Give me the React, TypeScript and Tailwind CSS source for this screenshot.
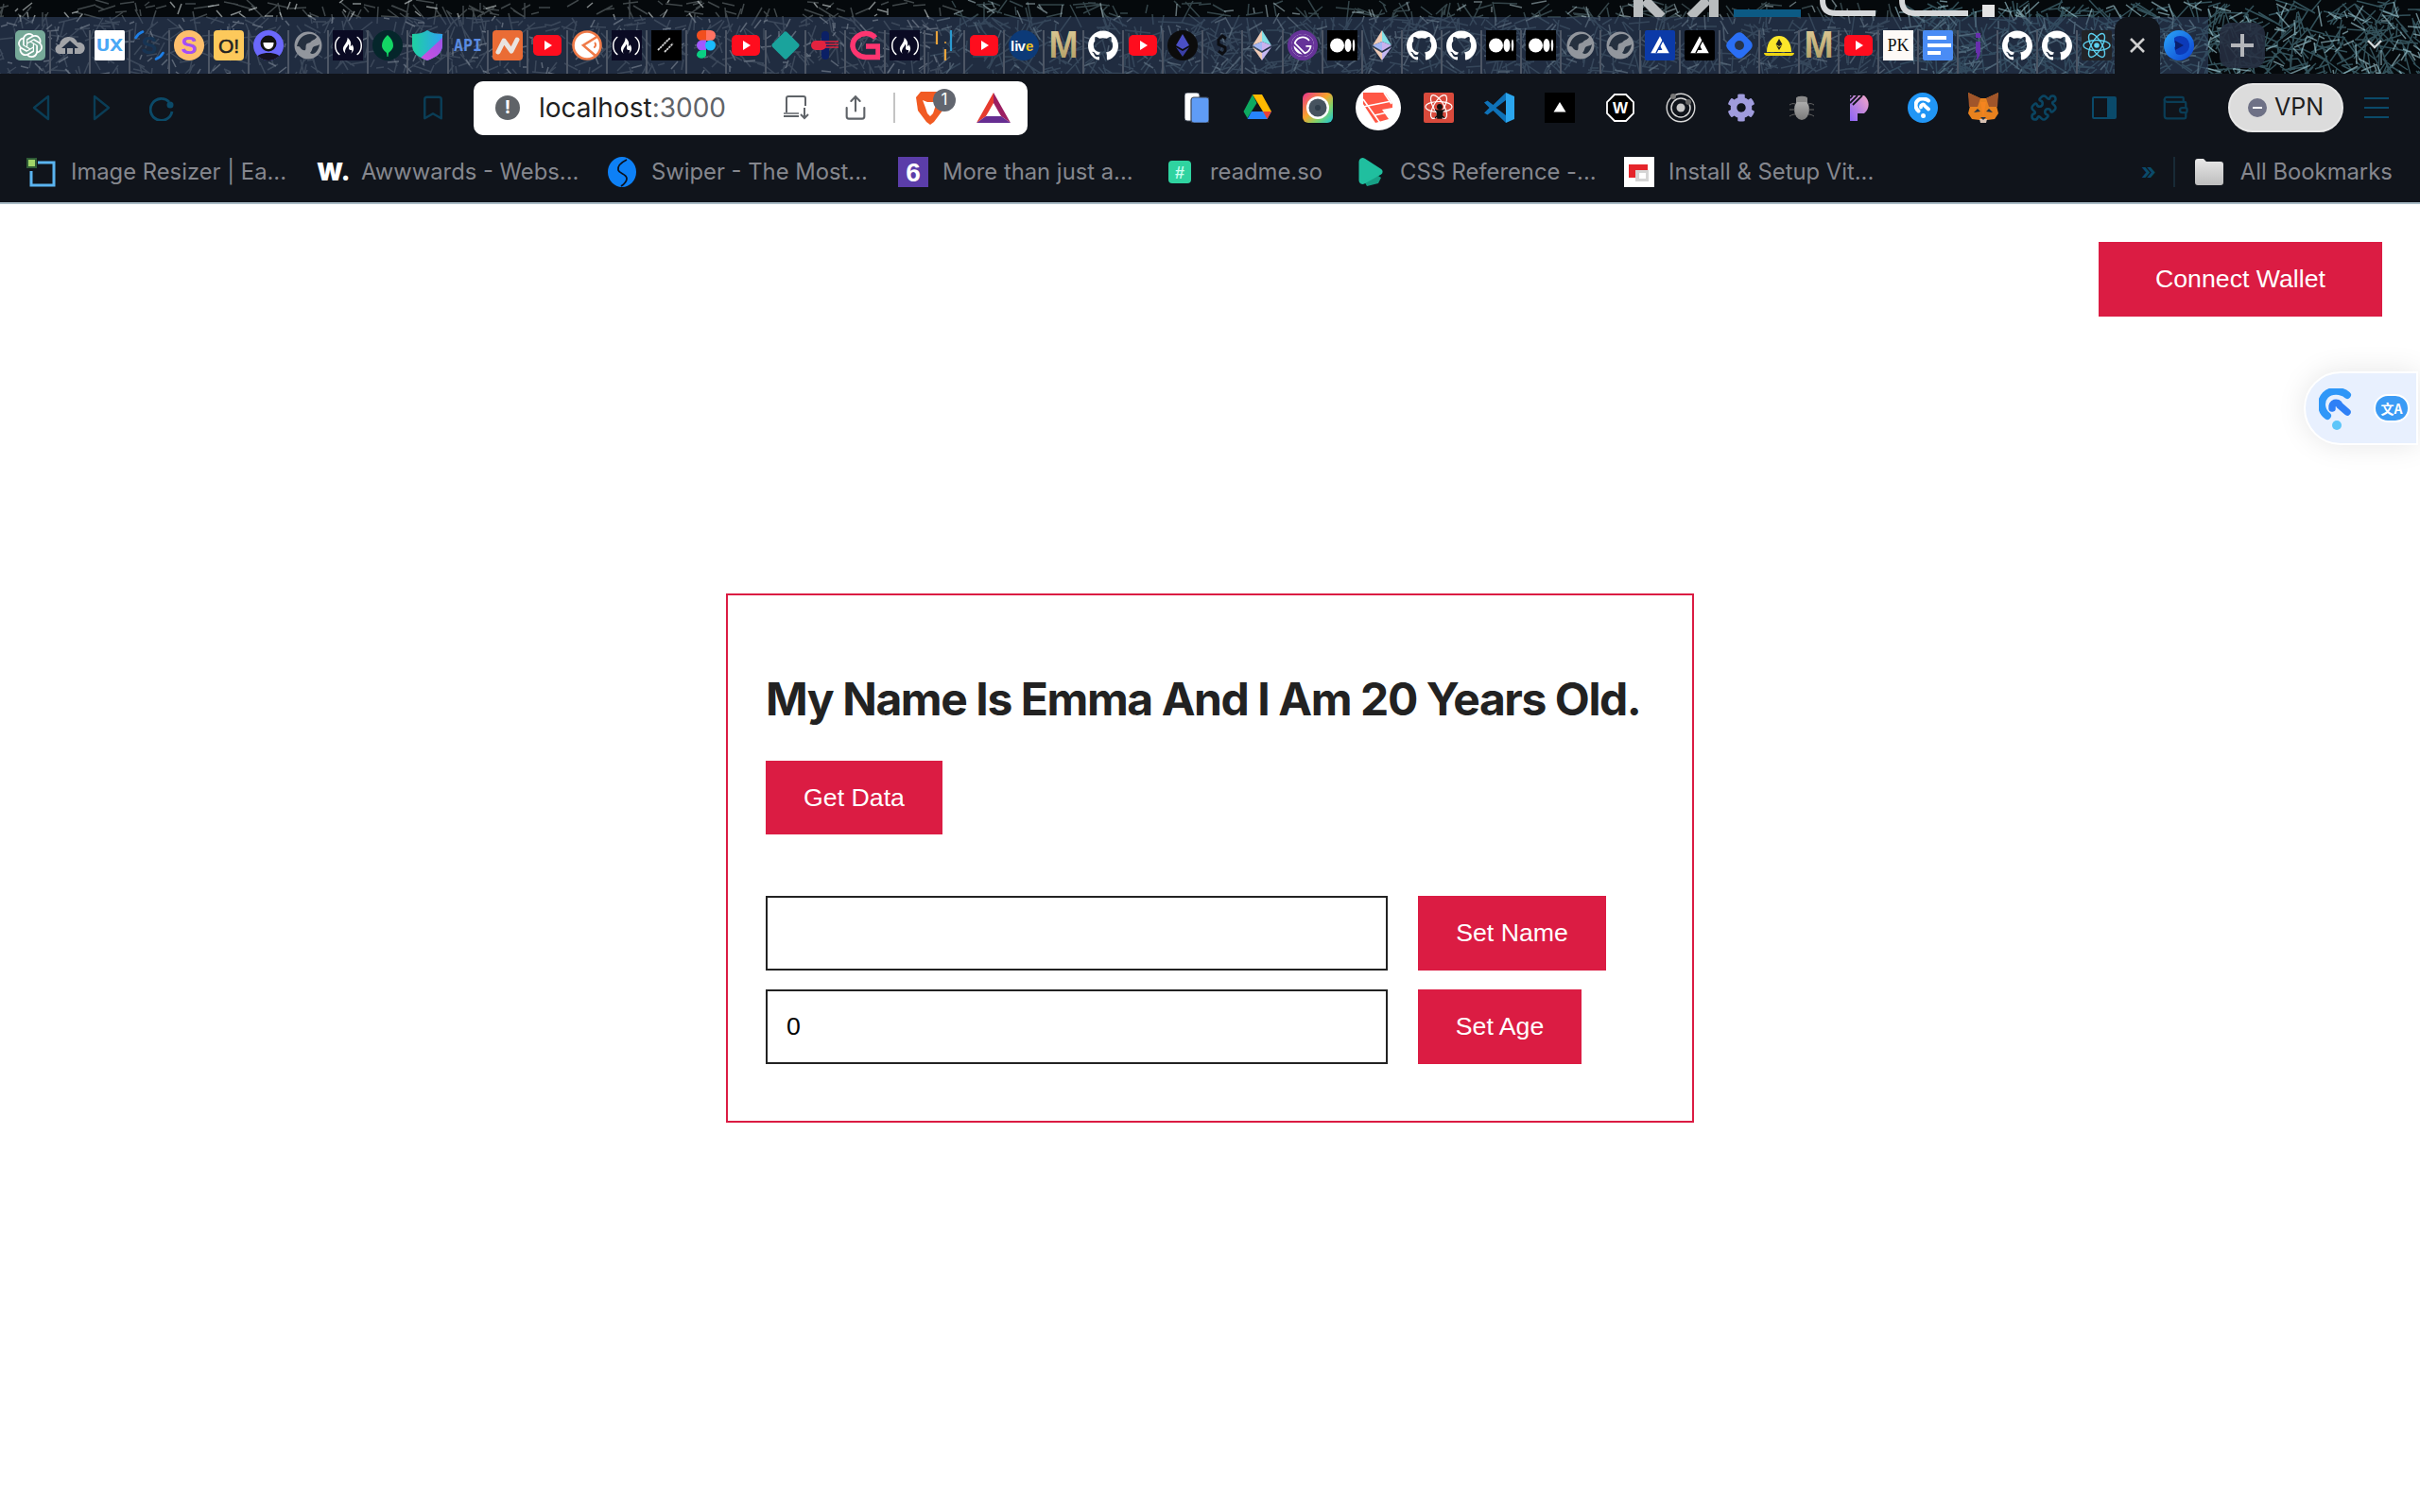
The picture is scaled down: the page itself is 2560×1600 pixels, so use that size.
import React from "react";
import { SiOpenai, SiFreecodecamp, SiGithub, SiGatsby } from "react-icons/si";
import { FaCog } from "react-icons/fa";
import { Puzzle, Wallet, Share, Bookmark } from "lucide-react";

const S = ({ children, cls = "w-8 h-8" }: { children: React.ReactNode; cls?: string }) => (
  <svg viewBox="0 0 32 32" className={`${cls} shrink-0 block`}>{children}</svg>
);

const mono = "'DejaVu Sans Mono', monospace";
const sans = "'Liberation Sans', sans-serif";

const Gpt = () => (
  <div className="w-8 h-8 rounded-[5px] bg-[#76a998] flex items-center justify-center shrink-0"><SiOpenai className="w-[26px] h-[26px] text-white" /></div>
);
const Cloud = () => (
  <S><path d="M6 25a5 5 0 0 1-1-10 10 10 0 0 1 19-2 6 6 0 0 1 3 12h-6v-6h4l-9-8-9 8h4v6z" fill="#a2a4a8" /><path d="M13 19h6v6h-6z" fill="#a2a4a8" /></S>
);
const UX = () => (
  <S><rect width="32" height="32" rx="1.5" fill="#fff" /><text x="16" y="22" textAnchor="middle" fontFamily={mono} fontWeight="700" fontSize="18" fill="#4aa8f5" textLength="28" lengthAdjust="spacingAndGlyphs">UX</text></S>
);
const ArcS = () => (
  <S><path d="M9 1.5A15 15 0 0 0 1.5 8M23 30.5A15 15 0 0 0 30.5 24" fill="none" stroke="#1c7ee6" strokeWidth="2.6" strokeLinecap="round" /><text x="16" y="25" textAnchor="middle" fontFamily={sans} fontWeight="700" fontSize="25" fill="#173453">S</text></S>
);
const YS = () => (
  <S><circle cx="16" cy="16" r="16" fill="#fdbe6c" /><text x="16" y="25" textAnchor="middle" fontFamily={sans} fontWeight="700" fontSize="26" fill="#a44ef5">S</text></S>
);
const OEx = () => (
  <S><rect width="32" height="32" rx="4" fill="#fdc95b" /><text x="16" y="24" textAnchor="middle" fontFamily={sans} fontWeight="400" fontSize="21" fill="#222" stroke="#222" strokeWidth=".5">O!</text></S>
);
const Avatar = () => (
  <S><defs><clipPath id="avc"><circle cx="16" cy="16" r="16" /></clipPath></defs><g clipPath="url(#avc)"><rect width="32" height="32" fill="#6b68fb" /><circle cx="16" cy="14" r="8.5" fill="#111" /><path d="M10.5 13h11c0 4-2 7-5.5 7s-5.5-3-5.5-7z" fill="#fff" /><path d="M2 32c1-6 7-8 14-8s13 2 14 8z" fill="#15121f" /></g></S>
);
const Globe = () => (
  <S><circle cx="16" cy="16" r="14.5" fill="#92969d" /><path d="M4 17C6 9 11 4 18 4c3 0 5 1 7 3-1 3-4 3-6 5-1 2-4 1-5 3-1 2 0 4-1 6-2 1-4-1-5-2-1-2-2-2-4-2z" fill="#25303f" /><path d="M28 15c-2 2-5 1-7 3-1 2-1 4-3 6 4 3 9-2 10-9z" fill="#25303f" /></S>
);
const Fcc = () => (
  <div className="w-8 h-8 bg-[#0a0a23] flex items-center justify-center shrink-0"><SiFreecodecamp className="w-[29px] h-[29px] text-white" /></div>
);
const Mongo = () => (
  <S><circle cx="16" cy="16" r="16" fill="#05262b" /><path d="M16 5c4 4 6 7 6 11 0 4-3 6-5 8l-.5 4h-1l-.5-4c-2-2-5-4-5-8 0-4 2-7 6-11z" fill="#13d564" /></S>
);
const Shield = () => (
  <S><defs><clipPath id="shc"><path d="M16 0c5 3 10 4 16 4v12c0 8-7 13-16 16C7 29 0 24 0 16V4c6 0 11-1 16-4z" /></clipPath><linearGradient id="shg" x1="0" y1="0" x2="1" y2="0"><stop offset="0" stopColor="#1fd1a0" /><stop offset="1" stopColor="#2ea3f2" /></linearGradient><linearGradient id="shp" x1="1" y1="0" x2="0" y2="1"><stop offset="0" stopColor="#9a55e8" /><stop offset="1" stopColor="#d14ee0" /></linearGradient></defs><g clipPath="url(#shc)"><rect width="32" height="32" fill="url(#shg)" /><path d="M32 8V32H6z" fill="url(#shp)" /></g></S>
);
const Api = () => (
  <S><text x="16" y="22" textAnchor="middle" fontFamily={mono} fontWeight="700" fontSize="17" fill="#5a8be0" textLength="30" lengthAdjust="spacingAndGlyphs">API</text></S>
);
const Nc = () => (
  <S><rect width="32" height="32" rx="4" fill="#ea6c35" /><path d="M6 23l6-12 8 11 6-12" fill="none" stroke="#e9e4e0" strokeWidth="5" strokeLinecap="round" strokeLinejoin="round" /></S>
);
const Yt = () => (
  <S><rect x="1" y="5" width="30" height="22" rx="5" fill="#ff0d1e" /><path d="M13 11l8 5-8 5z" fill="#fff" /></S>
);
const OrangeC = () => (
  <S><circle cx="16" cy="16" r="14.5" fill="#fff" stroke="#ef7a48" strokeWidth="2.6" /><path d="M28 6L12 16l13 11" fill="none" stroke="#ef7a48" strokeWidth="2.6" /><path d="M24 13c2 2 1 5-1 5" fill="none" stroke="#ef7a48" strokeWidth="2" /></S>
);
const Slash = () => (
  <S><rect width="32" height="32" fill="#000" /><path d="M7 21L20 8M14 23l9-9" stroke="#d5d5d5" strokeWidth="1.8" strokeDasharray="2.5 .6" /></S>
);
const Figma = () => (
  <S><path d="M6 5.5A5.5 5.5 0 0 1 11.5 0H16v11h-4.5A5.5 5.5 0 0 1 6 5.5z" fill="#f24e1e" /><path d="M16 0h4.5a5.5 5.5 0 0 1 0 11H16z" fill="#ff7262" /><path d="M6 16a5.5 5.5 0 0 1 5.5-5.5H16v11h-4.5A5.5 5.5 0 0 1 6 16z" fill="#a259ff" /><circle cx="20.5" cy="16" r="5.5" fill="#1abcfe" /><path d="M6 26.5A5.5 5.5 0 0 1 11.5 21H16v5.5a5.5 5.5 0 0 1-10 0z" fill="#0acf83" /></S>
);
const Diamond = () => (
  <S><rect x="5" y="5" width="22" height="22" rx="2.5" transform="rotate(45 16 16)" fill="#1aa39c" /></S>
);
const RedBlue = () => (
  <S><rect x="12" y="1" width="8" height="30" rx="4" fill="#0b2066" /><rect x="1" y="11" width="16" height="10" rx="5" fill="#e4233f" /><path d="M10 12h20M10 15h20M10 18h20" stroke="#e4233f" strokeWidth="1.3" /></S>
);
const Appw = () => (
  <S><path d="M27 8c-2.5-3-6-4.5-10-4.5C10 3.5 3 9 3 16s7 12.5 14 12.5h13V17H17" fill="none" stroke="#fe3570" strokeWidth="5.5" /></S>
);
const Bars = () => (
  <S><path d="M8 1v14M17 20v12" fill="none" strokeWidth="2.2" stroke="#e8a33b" /><path d="M23 0v22" stroke="#2a9ad0" strokeWidth="2.2" /><circle cx="17" cy="13" r="1" fill="#e8a33b" /></S>
);
const Live = () => (
  <S><circle cx="16" cy="16" r="16" fill="#0c3a78" /><text x="2" y="22" fontFamily={sans} fontWeight="700" fontSize="15" fill="#fff">li</text><text x="9.5" y="22" fontFamily={sans} fontWeight="700" fontSize="15" fill="#fff">v</text><text x="18" y="22" fontFamily={sans} fontWeight="700" fontSize="15" fill="#f2c31c">e</text></S>
);
const GoldM = () => (
  <svg viewBox="0 0 32 32" className="w-8 h-8 shrink-0 block overflow-visible"><defs><linearGradient id="gm" x1="0" y1="0" x2="0" y2="1"><stop offset="0" stopColor="#e2cf9c" /><stop offset="1" stopColor="#ad9a60" /></linearGradient></defs><text x="16" y="29" textAnchor="middle" fontFamily={sans} fontWeight="700" fontSize="40" fill="url(#gm)" textLength="31" lengthAdjust="spacingAndGlyphs">M</text></svg>
);
const Gh = () => <SiGithub className="w-8 h-8 text-white shrink-0" />;
const EthB = () => (
  <S><circle cx="16" cy="16" r="16" fill="#0c0c0c" /><path d="M16 4l7 12-7 4-7-4z" fill="#4a4fc5" /><path d="M16 22l7-4-7 10-7-10z" fill="#3a3ea5" /></S>
);
const Dark = () => (
  <S><path d="M20 9l-4-3-4 4v5l7 3v4l-3 3-4-3" fill="none" stroke="#0b0d12" strokeWidth="3" /></S>
);
const EthP = () => (
  <S><path d="M16 0L6 16l10-4z" fill="#f0cbb5" /><path d="M16 0l10 16-10-4z" fill="#84e0e6" /><path d="M16 12L6 16l10 6z" fill="#a2b6f5" /><path d="M16 12l10 4-10 6z" fill="#c9b2ee" /><path d="M6 18l10 14v-8z" fill="#f0cbb5" /><path d="M26 18L16 32v-8z" fill="#c6b8f0" /></S>
);
const Gats = () => (
  <div className="w-8 h-8 rounded-full bg-[#663399] flex items-center justify-center shrink-0"><div className="w-6 h-6 rounded-full bg-white flex items-center justify-center"><SiGatsby className="w-6 h-6 text-[#663399]" /></div></div>
);
const Med = () => (
  <S><rect width="32" height="32" fill="#000" /><ellipse cx="10.5" cy="16" rx="7.5" ry="7.5" fill="#fff" /><ellipse cx="22" cy="16" rx="3.5" ry="7" fill="#fff" /><ellipse cx="28" cy="16" rx="1.2" ry="6.5" fill="#fff" /></S>
);
const TriA = ({ bg }: { bg: string }) => (
  <div className="w-8 h-8 rounded-[2px] flex items-center justify-center shrink-0" style={{ background: bg }}>
    <S cls="w-[26px] h-[26px]"><path fillRule="evenodd" d="M16 4l12 22H4zM16 16l-3 6h6z" fill="#fff" /><path d="M20 9L11 26" stroke={bg} strokeWidth="1.6" /></S>
  </div>
);
const Hex = () => (
  <S><rect x="4.5" y="4.5" width="23" height="23" rx="6" transform="rotate(45 16 16)" fill="#2a6ff5" /><circle cx="16" cy="16" r="5" fill="#27344a" /></S>
);
const Helmet = () => (
  <S><path d="M3 23C3 12 9 6 16 6s13 6 13 17z" fill="#fbe62a" /><path d="M0 24h32c0 2-2 3-3 3H3c-1 0-3-1-3-3z" fill="#eed512" /><path d="M16 9l3.5 6-3.5 2-3.5-2zM16 18l3-2-3 5-3-5z" fill="#222" /></S>
);
const Pk = () => (
  <S><rect width="32" height="32" fill="#fdfaf7" /><text x="16" y="22" textAnchor="middle" fontFamily="'Liberation Serif', serif" fontSize="18" fill="#111">PK</text></S>
);
const Docs = () => (
  <S><rect width="32" height="32" rx="2" fill="#4a8cf5" /><path d="M5 6h20v4H5zM5 14h25v4H5zM5 22h14v4H5z" fill="#fff" /></S>
);
const PurpleI = () => (
  <S><path d="M14 3h5v5h-5zM14 12h5v11c0 3-2 7-5 9 1-3 2-5 1-8h-1z" fill="#682fae" /></S>
);
const ReactI = () => (
  <S><rect width="32" height="32" rx="2" fill="#222428" /><g fill="none" stroke="#5cd0ef" strokeWidth="1.4"><ellipse cx="16" cy="16" rx="14" ry="5.5" /><ellipse cx="16" cy="16" rx="14" ry="5.5" transform="rotate(60 16 16)" /><ellipse cx="16" cy="16" rx="14" ry="5.5" transform="rotate(120 16 16)" /></g><circle cx="16" cy="16" r="2.8" fill="#5cd0ef" /></S>
);
const BluePlay = () => (
  <S><defs><linearGradient id="bp" x1="0" y1="0" x2="1" y2="1"><stop offset="0" stopColor="#2ba7f9" /><stop offset="1" stopColor="#0c3fd0" /></linearGradient></defs><circle cx="16" cy="16" r="16" fill="url(#bp)" /><path d="M11 8a10 10 0 1 1 2 17l-2-7 5-2-5-3z" fill="#0c3ab8" /><path d="M12 11l9 5-9 5z" fill="#0a1f6d" /></S>
);

const tabIcons = [Gpt, Cloud, UX, ArcS, YS, OEx, Avatar, Globe, Fcc, Mongo, Shield, Api, Nc, Yt, OrangeC, Fcc, Slash, Figma, Yt, Diamond, RedBlue, Appw, Fcc, Bars, Yt, Live, GoldM, Gh, Yt, EthB, Dark, EthP, Gats, Med, EthP, Gh, Gh, Med, Med, Globe, Globe, () => <TriA bg="#0b3aa8" />, () => <TriA bg="#000" />, Hex, Helmet, GoldM, Yt, Pk, Docs, PurpleI, Gh, Gh, ReactI];

function buildLines() {
  let seed = 1337;
  const r = () => { seed = (seed * 1664525 + 1013904223) >>> 0; return seed / 4294967296; };
  const groups: { d: string; o: number; c: string }[] = [];
  const make = (x0: number, x1: number, n: number, c: string, o: number, len: number) => {
    let d = "";
    for (let i = 0; i < n; i++) {
      const x = x0 + r() * (x1 - x0), y = r() * 78, a = r() * Math.PI, l = len * (0.4 + r());
      d += `M${x.toFixed(0)} ${y.toFixed(0)}l${(Math.cos(a) * l).toFixed(0)} ${(Math.sin(a) * l).toFixed(0)}`;
    }
    groups.push({ d, o, c });
  };
  make(0, 1000, 600, "#c8d4d6", 0.3, 16);
  make(0, 1000, 200, "#e8eeee", 0.55, 9);
  make(1000, 2000, 800, "#8db4bd", 0.35, 20);
  make(1000, 2000, 220, "#c0d8de", 0.5, 12);
  make(2000, 2560, 560, "#5f97a6", 0.5, 26);
  make(2000, 2560, 200, "#a6d2dc", 0.6, 16);
  return groups;
}
const lineGroups = buildLines();

const Lines = () => (
  <>{lineGroups.map((g, i) => (<path key={i} d={g.d} stroke={g.c} strokeOpacity={g.o} strokeWidth="1.5" fill="none" />))}</>
);

const Wallpaper = () => (
  <svg className="absolute inset-0 w-full h-[78px]" viewBox="0 0 2560 78" preserveAspectRatio="none">
    <rect width="2560" height="78" fill="#05090c" />
    <Lines />
    <rect x="1834" y="10" width="71" height="8" fill="#0c5a84" />
    <path d="M1733 0v18M1813 0v18M1740 0l18 18M1806 0l-18 18" stroke="#b9bcbe" strokeWidth="10" fill="none" />
    <path d="M1928 0c0 9 4 14 14 14h42M2012 0c0 9 4 14 14 14h56" stroke="#d5d7d9" strokeWidth="6" fill="none" />
    <rect x="2097" y="5" width="13" height="13" fill="#e4e4e4" />
  </svg>
);

const dim = "#0a3d56";

const Files = () => (
  <svg viewBox="0 0 26 32" className="w-[26px] h-8 shrink-0"><rect x="0" y="0" width="16" height="30" rx="3" fill="#fff" stroke="#3d4656" strokeWidth="1" /><rect x="7" y="5" width="19" height="27" rx="3" fill="#5f9cf6" stroke="#3d4656" strokeWidth="1.2" /></svg>
);
const Drive = () => (
  <svg viewBox="0 0 30 28" className="w-[30px] h-7 shrink-0"><path d="M10 0l-9.5 18 4 7 10-16z" fill="#0da960" /><path d="M20 0l10 18h-9L10 0z" fill="#ffba00" /><path d="M9 18h21l-4.5 8H4.5z" fill="#2684fc" /><path d="M21 18h9l-4.5 8z" fill="#ea4335" /></svg>
);
const Cam = () => (
  <S><defs><linearGradient id="cg" x1="0" y1="0" x2="1" y2="1"><stop offset="0" stopColor="#ea2f8e" /><stop offset=".45" stopColor="#f8a52c" /><stop offset=".7" stopColor="#7fd36b" /><stop offset="1" stopColor="#18c4dc" /></linearGradient></defs><rect width="32" height="32" rx="6" fill="url(#cg)" /><circle cx="16" cy="16" r="12" fill="#fff" /><circle cx="16" cy="16" r="9.5" fill="#46535f" /><circle cx="16" cy="16" r="3" fill="#2f3d4a" /></S>
);
const Laravel = () => (
  <svg viewBox="0 0 48 48" className="w-12 h-12 shrink-0"><circle cx="24" cy="24" r="24" fill="#fff" /><path d="M8 8h23l8 12v4l-11 2 7 10-14 4-13-20z" fill="#ff5745" /><path d="M8 15l20 28M8 23l30-6M30 8l8 12M20 32l18-4M31 8h8v9" stroke="#fff" strokeWidth="1.6" fill="none" /></svg>
);
const Atom = () => (
  <S><rect width="32" height="32" rx="2" fill="#d94a3c" /><g fill="none" stroke="#fff" strokeWidth="1.2"><ellipse cx="16" cy="15" rx="14" ry="5.5" /><ellipse cx="16" cy="15" rx="14" ry="5.5" transform="rotate(60 16 15)" /><ellipse cx="16" cy="15" rx="14" ry="5.5" transform="rotate(120 16 15)" /></g><circle cx="17" cy="15" r="3" fill="#111" /><path d="M14 19h6l-1 8h-4zM12 18l4 3M22 18l-4 3M12 27l3-3M22 27l-3-3" stroke="#111" strokeWidth="1.5" fill="#111" /></S>
);
const Vsc = () => (
  <S><path d="M23 0l9 4v24l-9 4z" fill="#2ba6ee" /><path d="M23 0L9.5 13 3.5 8.5 0 10.5 5.5 16 0 21.5l3.5 2 6-4.5L23 32v-8L12.5 16 23 8z" fill="#0f72b8" /></S>
);
const BlackTri = () => (
  <S><rect width="32" height="32" fill="#000" /><path d="M16 10l6.5 10.500h-13z" fill="#fff" /></S>
);
const WExt = () => (
  <svg viewBox="0 0 30 30" className="w-[30px] h-[30px] shrink-0"><path d="M9 1h12l8 8v12l-8 8H9l-8-8V9z" fill="#000" stroke="#fff" strokeWidth="1.8" /><text x="15" y="21" textAnchor="middle" fontFamily={sans} fontWeight="700" fontSize="17" fill="#fff">W</text></svg>
);
const Ring = () => (
  <S><circle cx="16" cy="16" r="14.8" fill="none" stroke="#d8d8d8" strokeWidth="1.4" /><circle cx="16" cy="16" r="10" fill="none" stroke="#d8d8d8" strokeWidth="1.5" /><circle cx="16" cy="16" r="4.5" fill="#c8c8c8" /><circle cx="8" cy="4" r="3" fill="#777" /><circle cx="24" cy="10" r="3" fill="#666" /></S>
);
const Gear = () => <FaCog className="w-[30px] h-[30px] text-[#a09cdd] shrink-0" />;
const Bug = () => (
  <svg viewBox="0 0 28 28" className="w-7 h-7 shrink-0"><defs><linearGradient id="bg" x1="0" y1="0" x2="0" y2="1"><stop offset="0" stopColor="#b4b4b4" /><stop offset="1" stopColor="#7a7a7a" /></linearGradient></defs><ellipse cx="14" cy="16" rx="8" ry="11" fill="url(#bg)" /><path d="M8 4c0-3 12-3 12 0v4H8z" fill="#8a8a8a" /><path d="M7 10c-3-1-4 0-6 1M7 16H1M7 21c-3 0-4 1-6 2M21 10c3-1 4 0 6 1M21 16h6M21 21c3 0 4 1 6 2" stroke="#666" strokeWidth="1" fill="none" /></svg>
);
const Pat = () => (
  <svg viewBox="0 0 27 27" className="w-[27px] h-[27px] shrink-0"><defs><linearGradient id="pg" x1="1" y1="0" x2="0" y2="1"><stop offset="0" stopColor="#f3a6c8" /><stop offset="1" stopColor="#8a63f5" /></linearGradient></defs><path d="M0 0h15a12 12 0 0 1 0 19H8v8H0z" fill="url(#pg)" /><path d="M0 8L8 0M0 3L3 0M3 10L13 0" stroke="#10141b" strokeWidth="1.8" /></svg>
);
const Wglyph = ({ c1, c2, dot }: { c1: string; c2: string; dot: string }) => (
  <svg viewBox="0 0 36 44" className="w-full h-full block"><path d="M9 29C2 24 1 13 7 7 13 1 24 2 30 7" fill="none" stroke={c1} strokeWidth="8" strokeLinecap="round" /><path d="M14 21C13 15 20 13 22 18 L30 25" fill="none" stroke={c2} strokeWidth="7.5" strokeLinecap="round" /><circle cx="19" cy="39" r="5" fill={dot} /></svg>
);
const BlueExt = () => (
  <div className="w-8 h-8 rounded-full bg-[#2196f5] flex items-center justify-center shrink-0"><div className="w-[18px] h-[22px]"><Wglyph c1="#fff" c2="#fff" dot="#fff" /></div></div>
);
const Fox = () => (
  <S><path d="M0 0l13 6h6L32 0l-2 14 2 8-4 6-8 1h-8l-8-1-4-6 2-8z" fill="#e8821e" /><path d="M0 0l13 6-3 9H1zM32 0L19 6l3 9h9z" fill="#a0552a" /><path d="M12 28h8l-1 4h-6z" fill="#d7c1b3" /><path d="M13 26h6l-3 3z" fill="#233447" /><path d="M10 17l-4 4 7-1zM22 17l4 4-7-1z" fill="#233447" /><path d="M13 10l3 16 3-16z" fill="#f5841f" /></S>
);

const exts = [Files, Drive, Cam, Laravel, Atom, Vsc, BlackTri, WExt, Ring, Gear, Bug, Pat, BlueExt, Fox,
  () => <Puzzle className="w-[30px] h-[30px] shrink-0" style={{ color: "#0a4562" }} strokeWidth={2} />,
  () => <div className="w-[26px] h-6 border-[2.5px] rounded-[2px] border-[#0a4a6a] flex justify-end shrink-0"><div className="w-2 bg-[#0a4a6a]" /></div>];

const Resizer = () => (
  <S><path d="M12 6h17v24H5V15" fill="none" stroke="#5ab4f0" strokeWidth="3" /><rect x="1" y="2" width="9" height="9" fill="#a0d468" stroke="#2e5a35" strokeWidth="2" /></S>
);
const SwiperI = () => (
  <svg viewBox="0 0 32 32" className="w-8 h-8 shrink-0"><ellipse cx="16" cy="16" rx="15" ry="16" fill="#0d80f6" /><path d="M21 3c-6 3-10 7-9 11 1 4 9 4 9 9 0 3-3 6-6 8" fill="none" stroke="#0a1220" strokeWidth="1.8" /></svg>
);
const Six = () => (
  <S><rect width="32" height="32" fill="#5b3da9" /><text x="16" y="26" textAnchor="middle" fontFamily={sans} fontWeight="700" fontSize="28" fill="#fff">6</text></S>
);
const Readme = () => (
  <svg viewBox="0 0 24 32" className="w-6 h-8 mr-[5px] shrink-0"><rect y="4" width="24" height="24" rx="4" fill="#2fd3a0" /><text x="12" y="23" textAnchor="middle" fontFamily={sans} fontWeight="700" fontSize="18" fill="#c9fff0">#</text></svg>
);
const CssRef = () => (
  <S><path d="M8 24l16-4 3 2-3 6-12 3z" fill="#17a085" /><path d="M5 5c0-2 2-3 4-2l17 11c1.5 1 1.5 2.5 0 3.5L9 27c-2 1-4 0-4-2z" fill="#20bf9f" stroke="#20bf9f" strokeWidth="3" strokeLinejoin="round" /></S>
);
const Install = () => (
  <S><rect width="32" height="32" fill="#fff" /><path d="M5 8h20v6H12v8H5z" fill="#e5252b" /><path d="M12 14h14v12H12z" fill="#d5d5d5" /><path d="M16 17h7v6h-7z" fill="#fff" /></S>
);
const Folder = () => (
  <svg viewBox="0 0 30 28" className="w-[30px] h-7 shrink-0"><defs><linearGradient id="fg" x1="0" y1="0" x2="0" y2="1"><stop offset="0" stopColor="#e8e8e8" /><stop offset="1" stopColor="#bdbdbd" /></linearGradient></defs><path d="M0 3c0-2 1-3 3-3h6l3 3h15c2 0 3 1 3 3v19c0 2-1 3-3 3H3c-2 0-3-1-3-3z" fill="url(#fg)" /></svg>
);

const bookmarks: { icon: React.ReactNode; label: string; w: string }[] = [
  { icon: <Resizer />, label: "Image Resizer | Ea...", w: "w-[307px]" },
  { icon: <span className="w-8 text-center text-[26px] leading-8 font-black text-white font-['Inter',sans-serif]">W.</span>, label: "Awwwards - Webs...", w: "w-[307px]" },
  { icon: <SwiperI />, label: "Swiper - The Most...", w: "w-[308px]" },
  { icon: <Six />, label: "More than just a...", w: "w-[286px]" },
  { icon: <Readme />, label: "readme.so", w: "w-[198px]" },
  { icon: <CssRef />, label: "CSS Reference -...", w: "w-[284px]" },
  { icon: <Install />, label: "Install & Setup Vit...", w: "w-[300px]" },
];

const RedBtn = ({ children, cls }: { children: React.ReactNode; cls: string }) => (
  <button className={`${cls} bg-[#db1c43] text-white text-[26.7px] font-['Liberation_Sans',sans-serif] flex items-center justify-center shrink-0`}>{children}</button>
);

export default function App() {
  return (
    <div className="relative min-h-screen bg-white font-['Inter',sans-serif] overflow-hidden">
      <header className="bg-[#10141b]">
        <div className="relative h-[78px] flex pt-[18px]">
          <Wallpaper />
          <div className="relative w-[2336px] h-[60px] bg-[#26324a]/85 flex pl-[12px]">
            <svg className="absolute inset-0 w-full h-full opacity-40" viewBox="0 18 2336 60" preserveAspectRatio="none"><Lines /></svg>
            {tabIcons.map((I, i) => (
              <div key={i} className="relative w-[42.06px] h-[46px] mt-[14px] pl-1 border-r-2 border-[#4d5665] shrink-0"><I /></div>
            ))}
            <div className="relative w-[48px] h-[60px] -ml-[3px] bg-[#10141b] rounded-t-[14px] flex items-center justify-center shrink-0">
              <svg viewBox="0 0 16 16" className="w-4 h-4"><path d="M1 1l14 14M15 1L1 15" stroke="#cfcfcf" strokeWidth="2.6" /></svg>
            </div>
            <div className="relative ml-1 mt-[14px]"><BluePlay /></div>
          </div>
          <div className="relative ml-3 mt-[6px] w-12 h-12 rounded-[12px] bg-[#262f40]/90 flex items-center justify-center">
            <svg viewBox="0 0 24 24" className="w-6 h-6"><path d="M12 0v24M0 12h24" stroke="#b4b6ba" strokeWidth="4" /></svg>
          </div>
          <div className="relative ml-[108px] mt-[24px]">
            <svg viewBox="0 0 16 10" className="w-4 h-[10px]"><path d="M1 1l7 7 7-7" fill="none" stroke="#cfd6d8" strokeWidth="2.4" /></svg>
          </div>
        </div>

        <div className="h-[72px] flex items-center pl-[33px]">
          <svg viewBox="0 0 20 28" className="w-5 h-7 shrink-0"><path d="M18 2L3 14l15 12z" fill="none" stroke={dim} strokeWidth="2.4" strokeLinejoin="round" /></svg>
          <svg viewBox="0 0 20 28" className="w-5 h-7 ml-[45px] shrink-0"><path d="M2 2l15 12L2 26z" fill="none" stroke={dim} strokeWidth="2.4" strokeLinejoin="round" /></svg>
          <svg viewBox="0 0 28 28" className="w-7 h-7 ml-[40px] shrink-0"><path d="M21 8a11.5 11.5 0 1 0 3 10" fill="none" stroke="#0b4a68" strokeWidth="2.8" /><circle cx="22" cy="11" r="3.5" fill="#0b4a68" /></svg>
          <Bookmark className="w-[30px] h-[30px] ml-[257px] shrink-0" style={{ color: dim }} strokeWidth={2} />
          <div className="ml-[28px] w-[586px] h-[57px] bg-white rounded-[10px] flex items-center shrink-0 relative">
            <div className="ml-[23px] w-[26px] h-[26px] rounded-full bg-[#5f6368] text-white text-[19px] font-bold flex items-center justify-center shrink-0">!</div>
            <div className="ml-[20px] text-[28px] text-[#1f1f1f] w-[258px] shrink-0">localhost<span className="text-[#5f6368]">:3000</span></div>
            <svg viewBox="0 0 28 26" className="w-7 h-[26px] shrink-0"><path d="M4 18V3c0-1 1-2 2-2h16c1 0 2 1 2 2v8M1 22h16M23 13v11M19 20l4 4 4-4" fill="none" stroke="#5f6368" strokeWidth="2" /><path d="M1 19h16" stroke="#5f6368" strokeWidth="1.5" /></svg>
            <Share className="w-[28px] h-[30px] ml-[35px] text-[#5f6368] shrink-0" strokeWidth={1.8} />
            <div className="ml-[26px] w-[2px] h-8 bg-[#c4c4c4] shrink-0" />
            <svg viewBox="0 0 32 36" className="w-8 h-9 ml-[21px] shrink-0"><path d="M6 1h20l5 6-2 14-9 12-4 3-4-3-9-12L1 7z" fill="#f15a22" /><path d="M8 10l5 2h6l5-2-3 8-2 6-3 3-3-3-2-6z" fill="#fff" /></svg>
            <div className="absolute left-[486px] top-[8px] w-[24px] h-[24px] rounded-full bg-[#62666f] text-white text-[17px] flex items-center justify-center">1</div>
            <svg viewBox="0 0 36 32" className="w-9 h-8 ml-[33px] shrink-0"><path d="M18 0L0 32l10-7 8-14z" fill="#e63b2e" /><path d="M18 0l18 32-10-7-8-14z" fill="#9c1f62" /><path d="M18 18l8 7H10z" fill="#fff" /><path d="M0 32l10-7h16l10 7z" fill="#662d91" /></svg>
          </div>
          <div className="ml-[147px] flex items-center shrink-0">
            {exts.map((E, i) => (<div key={i} className="w-16 h-12 flex items-center justify-center shrink-0"><E /></div>))}
          </div>
          <Wallet className="w-[30px] h-[30px] ml-[28px] shrink-0" style={{ color: dim }} strokeWidth={1.8} />
          <div className="ml-[41px] w-[122px] h-[52px] rounded-full bg-[#dcdcdc] border-2 border-[#e8e8e8] flex items-center pl-[19px] shrink-0">
            <div className="w-[20px] h-[20px] rounded-full bg-[#6e7186] flex items-center justify-center"><div className="w-[10px] h-[2px] bg-white" /></div>
            <span className="ml-[8px] text-[25px] text-[#1f1f1f]">VPN</span>
          </div>
          <div className="ml-[22px] w-[26px] flex flex-col gap-2 shrink-0">
            <div className="h-[2px] bg-[#0a4a6a]" /><div className="h-[2px] bg-[#0a4a6a]" /><div className="h-[2px] bg-[#0a4a6a]" />
          </div>
        </div>

        <div className="h-[64px] flex items-center pl-[28px] text-[23.8px] text-[#85878e] whitespace-nowrap">
          {bookmarks.map((b, i) => (
            <div key={i} className={`${b.w} flex items-center gap-[15px] shrink-0`}>{b.icon}<span>{b.label}</span></div>
          ))}
          <span className="ml-[247px] text-[#0a4a6a] text-[24px] font-bold">»</span>
          <div className="ml-[18px] w-[2px] h-8 bg-[#182a36]" />
          <div className="ml-[21px] flex items-center gap-[18px]"><Folder /><span>All Bookmarks</span></div>
        </div>
        <div className="h-[2px] bg-[#aabcc6]" />
      </header>

      <main>
        <div className="flex justify-end pt-[40px] pr-[40px]">
          <RedBtn cls="w-[300px] h-[79px]">Connect Wallet</RedBtn>
        </div>
        <section className="mt-[293px] mx-auto w-[1024px] h-[560px] border-2 border-[#db1c43] pl-[40px] pt-[81px]">
          <h1 className="text-[48px] leading-[58px] font-bold text-[#222] whitespace-nowrap tracking-[-1.42px]">My Name Is Emma And I Am 20 Years Old.</h1>
          <RedBtn cls="mt-[36px] w-[187px] h-[78px]">Get Data</RedBtn>
          <div className="mt-[65px] flex gap-[32px] items-stretch">
            <input className="w-[658px] h-[79px] border-2 border-[#222] bg-white px-[20px] text-[26.7px] text-black font-['Liberation_Sans',sans-serif] outline-none" defaultValue="" />
            <RedBtn cls="w-[199px] h-[79px]">Set Name</RedBtn>
          </div>
          <div className="mt-[20px] flex gap-[32px] items-stretch">
            <input className="w-[658px] h-[79px] border-2 border-[#222] bg-white px-[20px] text-[26.7px] text-black font-['Liberation_Sans',sans-serif] outline-none" defaultValue="0" />
            <RedBtn cls="w-[173px] h-[79px]">Set Age</RedBtn>
          </div>
        </section>
      </main>

      <aside className="absolute left-[2437px] top-[393px] w-[121px] h-[78px] rounded-l-[39px] border-2 border-white bg-[#e8f0fe] shadow-[0_0_30px_rgba(0,0,0,0.10)] flex items-center pl-[14px]">
        <div className="w-9 h-11 mt-[2px]"><Wglyph c1="#2f97f8" c2="#2f80f6" dot="#5cc5f9" /></div>
        <div className="ml-[22px] w-[38px] h-[30px] rounded-full bg-[#3b9bf5] border-2 border-white text-white flex items-center justify-center text-[14px] font-bold font-['Noto_Sans_CJK_SC',sans-serif] leading-none">文A</div>
      </aside>
    </div>
  );
}
